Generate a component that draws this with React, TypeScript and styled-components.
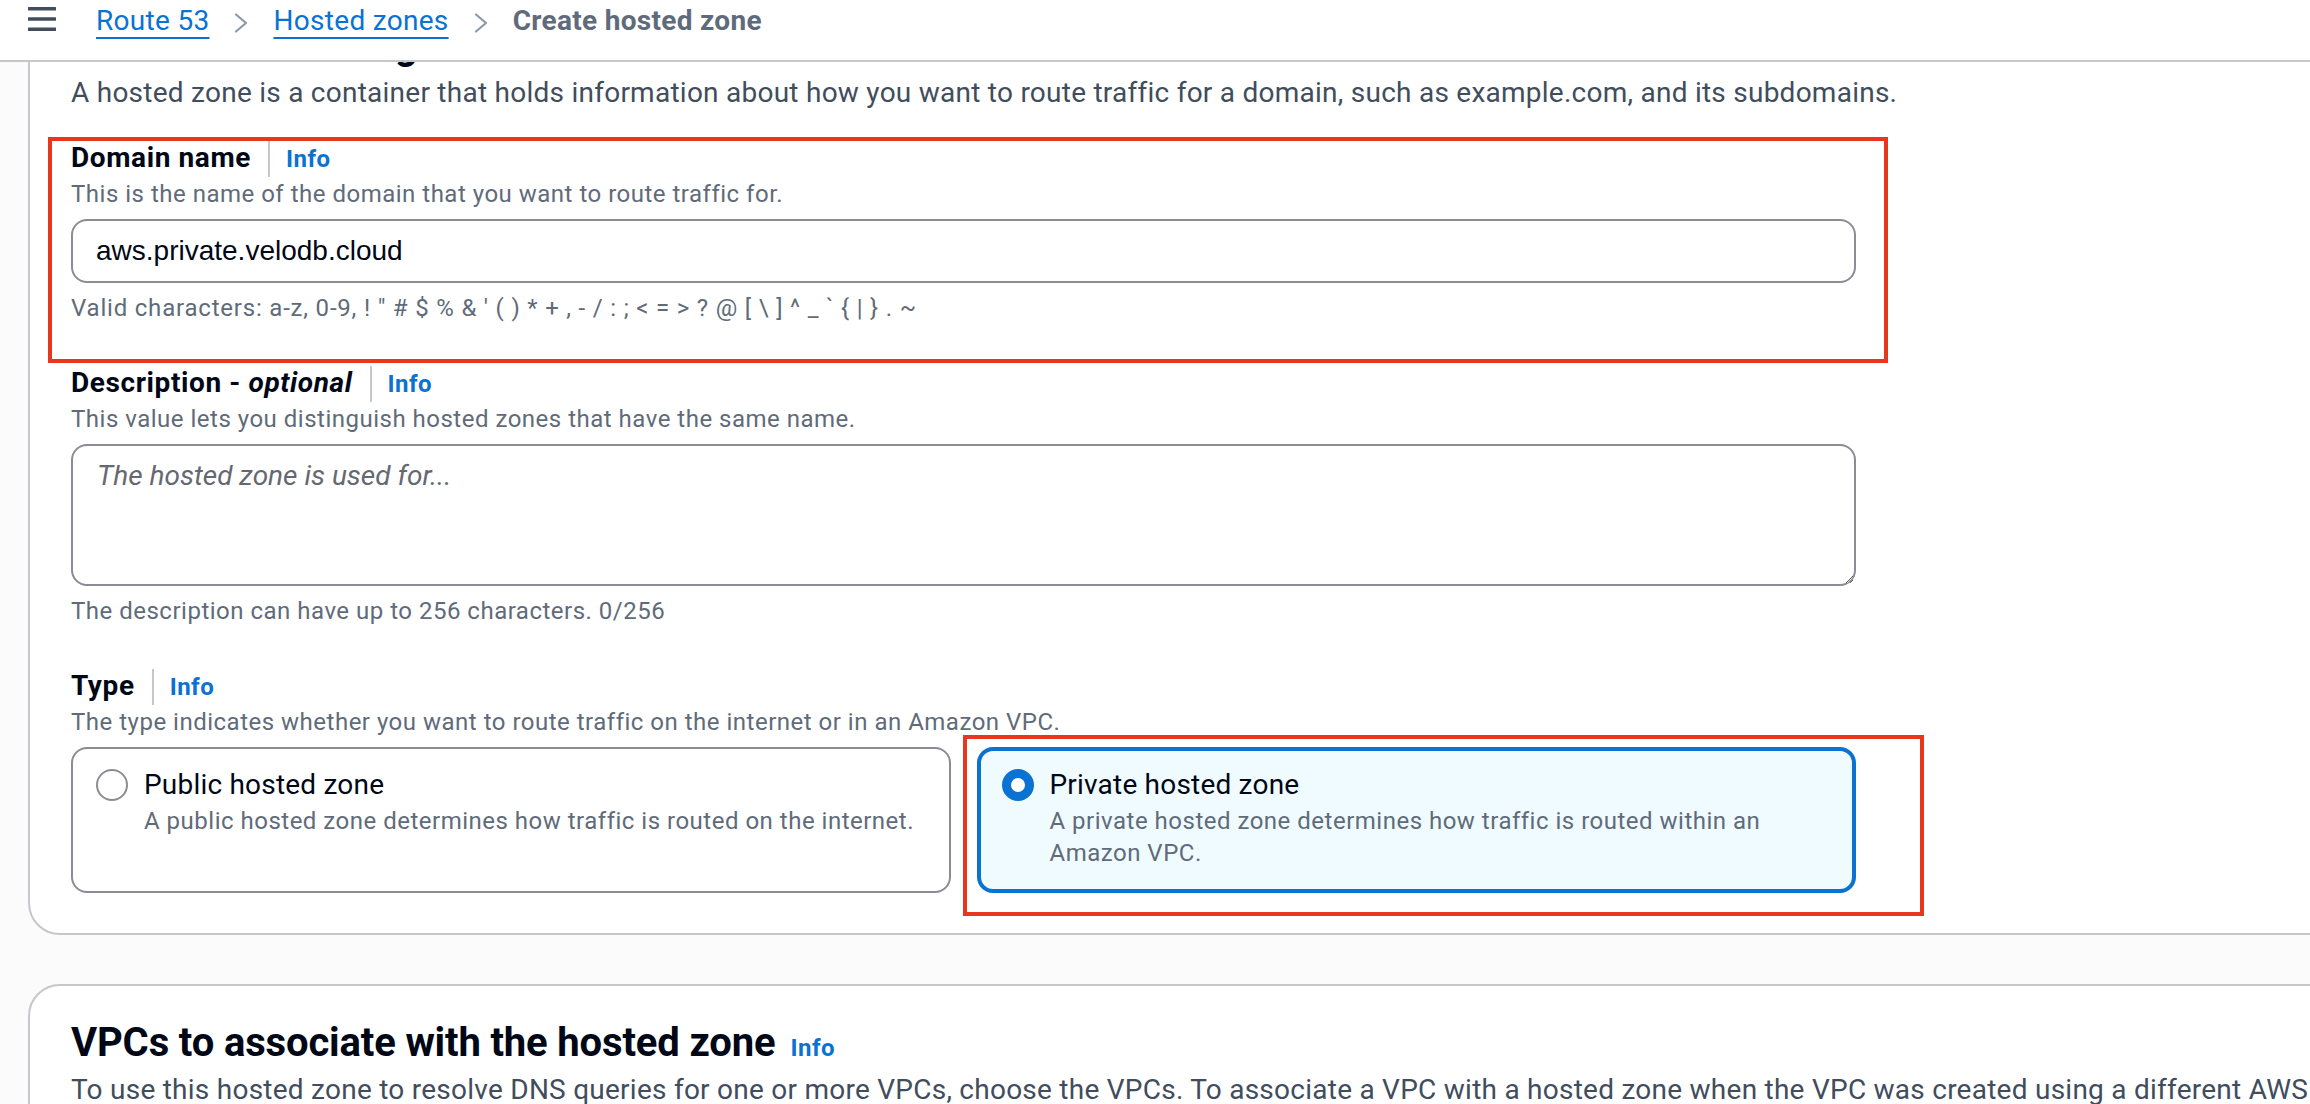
import React from 'react'
import styled, { createGlobalStyle } from 'styled-components'

const GlobalStyle = createGlobalStyle`
  html, body {
    margin: 0;
    padding: 0;
  }
  body {
    background: #fbfbfc;
    font-family: Roboto, "Open Sans", "Helvetica Neue", Arial, sans-serif;
    color: #000716;
    overflow: hidden;
  }
  * {
    box-sizing: border-box;
  }
`

const Page = styled.div`
  width: 2310px;
  height: 1104px;
  overflow: hidden;
`

const TopBar = styled.header`
  position: relative;
  z-index: 2;
  display: flex;
  align-items: flex-start;
  height: 62px;
  padding-left: 28px;
  background: #ffffff;
  border-bottom: 2px solid #c6c6cd;
`

const MenuButton = styled.button`
  display: flex;
  margin: 7px 40px 0 0;
  padding: 0;
  border: 0;
  background: none;
  color: #414d5c;
`

const Breadcrumbs = styled.nav`
  display: flex;
  align-items: flex-start;
  padding-top: 1px;
  font-size: 28px;
  line-height: 40px;
  letter-spacing: 0.3px;
`

const Crumb = styled.a`
  color: #0972d3;
  text-decoration: underline;
  text-decoration-thickness: 2px;
  text-underline-offset: 7px;
`

const CurrentCrumb = styled.span`
  color: #5f6b7a;
  font-weight: 700;
`

const Chevron = styled.svg`
  width: 16px;
  height: 20px;
  margin: 12px 24px 0;
  flex: none;
`

/* the page is scrolled a little: the first container's title sits under the top bar */
const Main = styled.main`
  display: flex;
  flex-direction: column;
  gap: 49px;
  width: 2600px;
  margin-top: -75px;
  padding-left: 28px;
`

const Card = styled.section`
  background: #ffffff;
  border: 2px solid #c6c6cd;
  border-radius: 32px;
  padding: 33px 40px 40px 41px;
`

const HeadingRow = styled.div`
  display: flex;
  align-items: baseline;
`

const Heading = styled.h2`
  margin: 0;
  font-size: 40px;
  line-height: 48px;
  font-weight: 700;
  letter-spacing: -0.15px;
  color: #000716;
`

const HeaderDescription = styled.p`
  margin: 3px 0 0;
  font-size: 28px;
  line-height: 40px;
  letter-spacing: 0.25px;
  color: #414d5c;
  white-space: nowrap;
`

const InfoLink = styled.a<{ $divider?: boolean }>`
  font-size: 24px;
  line-height: 36px;
  font-weight: 700;
  letter-spacing: 0.5px;
  color: #0972d3;
  margin-left: ${p => (p.$divider ? '17px' : '15px')};
  padding-left: ${p => (p.$divider ? '16px' : '0')};
  border-left: ${p => (p.$divider ? '2px solid #c6c6cd' : 'none')};
`

const Form = styled.div`
  display: flex;
  flex-direction: column;
  gap: 39px;
  max-width: 1785px;
  margin-top: 25px;
`

const Field = styled.div`
  display: flex;
  flex-direction: column;
`

const Highlight = styled.div<{ $top: number; $right: number; $bottom: number; $left: number }>`
  position: relative;
  display: grid;

  &::after {
    content: '';
    position: absolute;
    top: ${p => p.$top}px;
    right: ${p => p.$right}px;
    bottom: ${p => p.$bottom}px;
    left: ${p => p.$left}px;
    border: 4px solid #e8361f;
    pointer-events: none;
  }
`

const LabelRow = styled.div`
  display: flex;
  align-items: baseline;
`

const Label = styled.span`
  font-size: 28px;
  line-height: 40px;
  font-weight: 700;
  letter-spacing: 0.6px;
  color: #000716;

  em {
    font-style: italic;
  }
`

const Hint = styled.span<{ $gap?: boolean; $symbols?: boolean }>`
  display: block;
  margin-top: ${p => (p.$gap ? '9px' : '0')};
  font-size: 24px;
  line-height: 32px;
  letter-spacing: ${p => (p.$symbols ? '0.8px' : '0.5px')};
  color: #5f6b7a;
`

const TextInput = styled.input`
  display: block;
  width: 100%;
  height: 64px;
  margin-top: 9px;
  padding: 0 23px;
  border: 2px solid #8c8c94;
  border-radius: 16px;
  background: #ffffff;
  font-family: "Liberation Sans", Arial, sans-serif;
  font-size: 28px;
  color: #000716;
  outline: none;
`

const TextArea = styled.textarea`
  display: block;
  width: 100%;
  height: 142px;
  margin-top: 9px;
  padding: 10px 24px;
  border: 2px solid #8c8c94;
  border-radius: 16px;
  background: #ffffff;
  font-family: Roboto, "Open Sans", sans-serif;
  font-size: 28px;
  line-height: 40px;
  color: #000716;
  resize: vertical;
  outline: none;

  &::placeholder {
    color: #656871;
    font-style: italic;
  }
`

const TileGrid = styled.div`
  display: grid;
  grid-template-columns: 1fr 1fr;
  column-gap: 26px;
  margin-top: 9px;
`

const Tile = styled.label<{ $checked?: boolean }>`
  display: flex;
  align-items: flex-start;
  gap: 16px;
  border: ${p => (p.$checked ? '4px solid #0972d3' : '2px solid #8c8c94')};
  border-radius: 16px;
  padding: ${p => (p.$checked ? '14px 20px 20px 21px' : '16px 22px 22px 23px')};
  background: ${p => (p.$checked ? '#f0fbff' : '#ffffff')};
`

const RadioDot = styled.span<{ $checked?: boolean }>`
  flex: none;
  width: 32px;
  height: 32px;
  margin-top: 4px;
  border-radius: 50%;
  background: #ffffff;
  border: ${p => (p.$checked ? '9px solid #0972d3' : '2px solid #8c8c94')};
`

const TileText = styled.div`
  display: flex;
  flex-direction: column;
`

const TileTitle = styled.span`
  font-size: 28px;
  line-height: 40px;
  letter-spacing: 0.2px;
  color: #000716;
`

const TileDescription = styled.span`
  font-size: 24px;
  line-height: 32px;
  letter-spacing: 0.5px;
  color: #5f6b7a;
`

const VALID_CHARS = 'Valid characters: a-z, 0-9, ! " # $ % & \' ( ) * + , - / : ; < = > ? @ [ \\ ] ^ _ ` { | } . ~'

const Separator = () => (
  <Chevron viewBox="0 0 16 20">
    <polyline points="3,1.5 13,10 3,18.5" fill="none" stroke="#8d99a8" strokeWidth="2.2" strokeLinejoin="round" strokeLinecap="round" />
  </Chevron>
)

const App: React.FC = () => (
  <Page>
    <GlobalStyle />
    <TopBar>
      <MenuButton aria-label="Open navigation">
        <svg width="28" height="24" viewBox="0 0 28 24">
          <rect x="0" y="0" width="28" height="3.5" rx="0.5" fill="currentColor" />
          <rect x="0" y="10.25" width="28" height="3.5" rx="0.5" fill="currentColor" />
          <rect x="0" y="20.5" width="28" height="3.5" rx="0.5" fill="currentColor" />
        </svg>
      </MenuButton>
      <Breadcrumbs>
        <Crumb>Route 53</Crumb>
        <Separator />
        <Crumb>Hosted zones</Crumb>
        <Separator />
        <CurrentCrumb>Create hosted zone</CurrentCrumb>
      </Breadcrumbs>
    </TopBar>

    <Main>
      <Card>
        <Heading>Hosted zone configuration</Heading>
        <HeaderDescription>
          A hosted zone is a container that holds information about how you want to route traffic for a domain, such as example.com, and its subdomains.
        </HeaderDescription>

        <Form>
          <Highlight $top={-1} $right={-32} $bottom={-39} $left={-23}>
            <Field>
              <LabelRow>
                <Label>Domain name</Label>
                <InfoLink $divider>Info</InfoLink>
              </LabelRow>
              <Hint>This is the name of the domain that you want to route traffic for.</Hint>
              <TextInput readOnly value="aws.private.velodb.cloud" />
              <Hint $gap $symbols>{VALID_CHARS}</Hint>
            </Field>
          </Highlight>

          <Field>
            <LabelRow>
              <Label>
                Description - <em>optional</em>
              </Label>
              <InfoLink $divider>Info</InfoLink>
            </LabelRow>
            <Hint>This value lets you distinguish hosted zones that have the same name.</Hint>
            <TextArea placeholder="The hosted zone is used for..." />
            <Hint $gap>The description can have up to 256 characters. 0/256</Hint>
          </Field>

          <Field>
            <LabelRow>
              <Label>Type</Label>
              <InfoLink $divider>Info</InfoLink>
            </LabelRow>
            <Hint>The type indicates whether you want to route traffic on the internet or in an Amazon VPC.</Hint>
            <TileGrid>
              <Tile>
                <RadioDot />
                <TileText>
                  <TileTitle>Public hosted zone</TileTitle>
                  <TileDescription>A public hosted zone determines how traffic is routed on the internet.</TileDescription>
                </TileText>
              </Tile>
              <Highlight $top={-12} $right={-68} $bottom={-23} $left={-14}>
                <Tile $checked>
                  <RadioDot $checked />
                  <TileText>
                    <TileTitle>Private hosted zone</TileTitle>
                    <TileDescription>A private hosted zone determines how traffic is routed within an Amazon VPC.</TileDescription>
                  </TileText>
                </Tile>
              </Highlight>
            </TileGrid>
          </Field>
        </Form>
      </Card>

      <Card>
        <HeadingRow>
          <Heading>VPCs to associate with the hosted zone</Heading>
          <InfoLink>Info</InfoLink>
        </HeadingRow>
        <HeaderDescription>
          To use this hosted zone to resolve DNS queries for one or more VPCs, choose the VPCs. To associate a VPC with a hosted zone when the VPC was created using a different AWS account, you must use a programmatic method, such as the AWS CLI.
        </HeaderDescription>
      </Card>
    </Main>
  </Page>
)

export default App
